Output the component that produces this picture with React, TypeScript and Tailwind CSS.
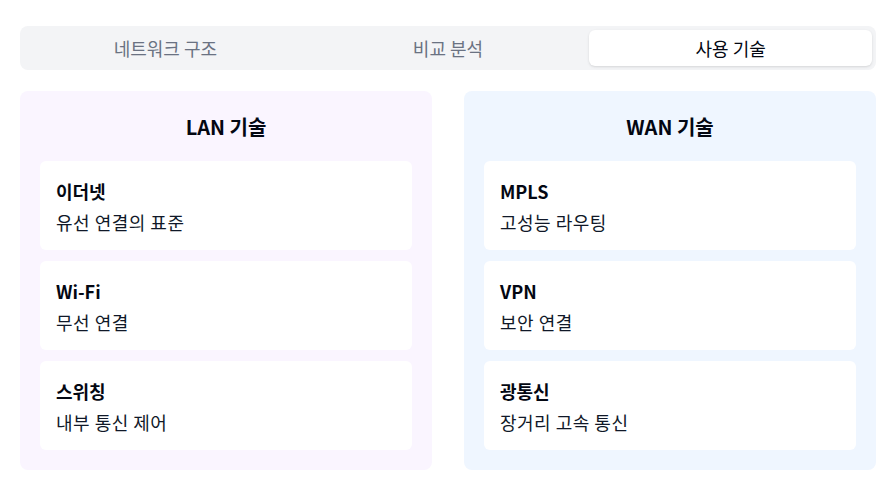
import React, { useState } from 'react';

type Tech = { name: string; desc: string };

const LAN: Tech[] = [
  { name: '이더넷', desc: '유선 연결의 표준' },
  { name: 'Wi-Fi', desc: '무선 연결' },
  { name: '스위칭', desc: '내부 통신 제어' },
];

const WAN: Tech[] = [
  { name: 'MPLS', desc: '고성능 라우팅' },
  { name: 'VPN', desc: '보안 연결' },
  { name: '광통신', desc: '장거리 고속 통신' },
];

const TABS = ['네트워크 구조', '비교 분석', '사용 기술'];

const Panel: React.FC<{ title: string; items: Tech[]; bg: string }> = ({ title, items, bg }) => (
  <div className={`${bg} rounded-lg p-5`}>
    <h3 className="text-xl font-bold text-center leading-7 mt-[2px] mb-[20px] text-gray-950">{title}</h3>
    <div className="flex flex-col gap-[11px]">
      {items.map(t => (
        <div key={t.name} className="bg-white rounded-md p-4">
          <div className="text-lg font-bold leading-7 text-gray-950">{t.name}</div>
          <div className="text-lg leading-6 mt-[5px] text-gray-900 tracking-[0.5px]">{t.desc}</div>
        </div>
      ))}
    </div>
  </div>
);

export default function App() {
  const [tab, setTab] = useState(2);

  return (
    <div
      className="min-h-screen bg-white pl-5 pr-4 pt-[26px]"
      style={{ fontFamily: '"Noto Sans CJK KR", "Noto Sans", sans-serif' }}
    >
      <div className="grid grid-cols-3 bg-gray-100 rounded-lg p-1">
        {TABS.map((t, i) => (
          <button
            key={t}
            onClick={() => setTab(i)}
            className={`py-1.5 text-lg leading-6 rounded-md ${
              tab === i ? 'bg-white text-gray-950 shadow-sm' : 'text-gray-500'
            }`}
          >
            {t}
          </button>
        ))}
      </div>

      <div className="grid grid-cols-2 gap-8 mt-[21px]">
        <Panel title="LAN 기술" items={LAN} bg="bg-purple-50" />
        <Panel title="WAN 기술" items={WAN} bg="bg-blue-50" />
      </div>
    </div>
  );
}
